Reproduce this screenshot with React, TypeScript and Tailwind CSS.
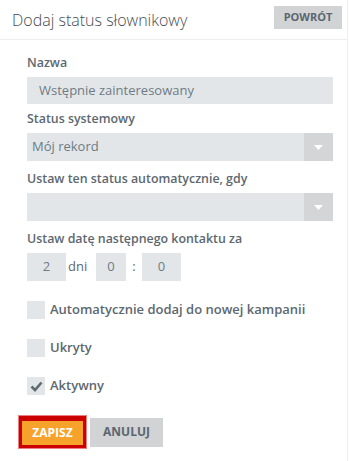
import React from "react";

function Label({ children, className = "" }: { children: React.ReactNode; className?: string }) {
  return (
    <div className={`text-[12.4px] leading-[18px] font-semibold text-[#5d6870] mb-[5px] ${className}`}>
      {children}
    </div>
  );
}

function Select({ value }: { value?: string }) {
  return (
    <div className="flex h-[28px] w-[306px] bg-[#e3e6e8] mb-[9px]">
      <div className="flex-1 px-[5px] flex items-center text-[13px] text-[#6e7b85]">{value}</div>
      <div className="w-[29px] bg-[#d3d5d7] flex items-center justify-center">
        <svg width="9" height="5" viewBox="0 0 9 5">
          <polygon points="0,0 9,0 4.5,5" fill="#ffffff" />
        </svg>
      </div>
    </div>
  );
}

function Checkbox({ label, checked = false }: { label: string; checked?: boolean }) {
  return (
    <div className="flex items-center h-[18px] mb-[20px]">
      <div className="w-[18px] h-[18px] bg-[#e3e6e8] flex items-center justify-center">
        {checked && (
          <svg width="13" height="11" viewBox="0 0 13 11">
            <polyline points="1.5,5.5 5,9 11.5,1.5" fill="none" stroke="#5f6b73" strokeWidth="2.6" />
          </svg>
        )}
      </div>
      <span className="ml-[5px] text-[13px] font-semibold text-[#5d6870]">{label}</span>
    </div>
  );
}

export default function App() {
  return (
    <div className="w-[348px] min-h-[461px] bg-white border-r border-[#eeeeee]" style={{ fontFamily: '"Open Sans", sans-serif' }}>
      <div className="h-[40px] border-b border-[#eeeeee] flex items-center justify-between pl-[12px] pr-[5px]">
        <div className="text-[16px] font-light text-[#444c52] mt-[1px]">Dodaj status słownikowy</div>
        <button className="h-[23px] w-[68px] bg-[#d1d3d5] text-[11px] font-bold text-[#5b6670] -mt-[5px]">POWRÓT</button>
      </div>

      <div className="pl-[27px] pt-[14px]">
        <Label>Nazwa</Label>
        <div className="h-[27px] w-[306px] bg-[#e3e6e8] mb-[6px] pl-[12px] flex items-center text-[13px] text-[#6e7b85]">
          Wstępnie zainteresowany
        </div>

        <Label>Status systemowy</Label>
        <Select value="Mój rekord" />

        <Label>Ustaw ten status automatycznie, gdy</Label>
        <Select />

        <Label>Ustaw datę następnego kontaktu za</Label>
        <div className="flex items-center h-[28px] text-[13px] text-[#6e7b85]">
          <div className="w-[39px] h-full bg-[#e3e6e8] flex items-center justify-center">2</div>
          <span className="ml-[2px] w-[28px] text-[#5d6870]">dni</span>
          <div className="w-[30px] h-full bg-[#e3e6e8] flex items-center justify-center">0</div>
          <span className="w-[16px] text-center text-[#5d6870]">:</span>
          <div className="w-[39px] h-full bg-[#e3e6e8] flex items-center justify-center">0</div>
        </div>

        <div className="mt-[20px]">
          <Checkbox label="Automatycznie dodaj do nowej kampanii" />
          <Checkbox label="Ukryty" />
          <Checkbox label="Aktywny" checked />
        </div>
      </div>

      <div className="flex items-center pl-[18px] mt-[3px]">
        <div className="border border-[#e88080] p-[3px] bg-[#cc0000]">
          <button className="h-[24px] w-[61px] bg-[#f6a22b] text-[12px] font-bold text-white">ZAPISZ</button>
        </div>
        <button className="ml-[3px] h-[29px] w-[73px] bg-[#d1d3d5] text-[12px] font-bold text-[#5b6670]">ANULUJ</button>
      </div>
    </div>
  );
}
